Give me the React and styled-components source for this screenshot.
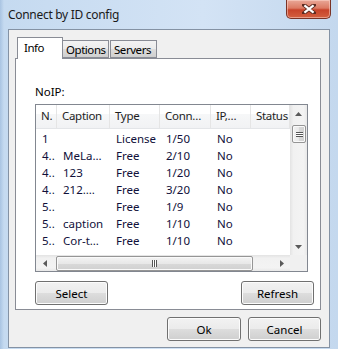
import React from 'react'
import styled, { createGlobalStyle } from 'styled-components'

const GlobalStyle = createGlobalStyle`
  html, body { margin: 0; padding: 0; background: #cfe0f3; }
  body { font-family: "Noto Sans", "Open Sans", sans-serif; font-size: 11.5px; color: #000; }
`

const columns = ['N.', 'Caption', 'Type', 'Conn…', 'IP,…', 'Status']
const rows = [
  ['1', '', 'License', '1/50', 'No'],
  ['4..', 'MeLa…', 'Free', '2/10', 'No'],
  ['4..', '123', 'Free', '1/20', 'No'],
  ['4..', '212.…', 'Free', '3/20', 'No'],
  ['5..', '', 'Free', '1/9', 'No'],
  ['5..', 'caption', 'Free', '1/10', 'No'],
  ['5..', 'Cor-t…', 'Free', '1/10', 'No'],
]

//small scroll arrows
const Arrow = ({ dir }) => {
  const pts = {
    up: '0,4 3.5,0 7,4',
    down: '0,0 3.5,4 7,0',
    left: '4,0 0,3.5 4,7',
    right: '0,0 4,3.5 0,7',
  }[dir]
  const vert = dir === 'up' || dir === 'down'
  return (
    <svg width={vert ? 7 : 4} height={vert ? 4 : 7}>
      <polygon points={pts} fill="#5a5a5a" />
    </svg>
  )
}

export default function App() {
  return (
    <>
      <GlobalStyle />
      <Window>
        <TitleBar>
          <Title>Connect by ID config</Title>
          <CloseButton>
            <svg width="14" height="10" viewBox="0 0 14 10">
              <path d="M2 1 L12 9 M12 1 L2 9" stroke="#5b2a20" strokeWidth="4" strokeLinecap="round" />
              <path d="M2.4 1.3 L11.6 8.7 M11.6 1.3 L2.4 8.7" stroke="#fff" strokeWidth="2.2" />
            </svg>
          </CloseButton>
        </TitleBar>
        <Client>
          <Tabs>
            <Tab active width={46}>Info</Tab>
            <Tab width={46}>Options</Tab>
            <Tab gap width={47}>Servers</Tab>
          </Tabs>
          <Panel>
            <Label>NoIP:</Label>
            <ListBox>
              <ListContent>
                <HeaderRow>
                  {columns.map((c) => (
                    <HeaderCell key={c}>{c}</HeaderCell>
                  ))}
                </HeaderRow>
                {rows.map((r, i) => (
                  <Row key={i}>
                    {r.map((v, j) => (
                      <Cell key={j}>{v}</Cell>
                    ))}
                    <Cell />
                  </Row>
                ))}
              </ListContent>
              <VScroll>
                <ArrowBox><Arrow dir="up" /></ArrowBox>
                <VTrack>
                  <VThumb>
                    <Grip vertical />
                  </VThumb>
                </VTrack>
                <ArrowBox><Arrow dir="down" /></ArrowBox>
              </VScroll>
              <HScroll>
                <ArrowBox><Arrow dir="left" /></ArrowBox>
                <HTrack>
                  <HThumb>
                    <Grip />
                  </HThumb>
                </HTrack>
                <ArrowBox><Arrow dir="right" /></ArrowBox>
              </HScroll>
              <Corner />
            </ListBox>
            <PanelButtons>
              <Button>Select</Button>
              <Button>Refresh</Button>
            </PanelButtons>
          </Panel>
          <DialogButtons>
            <Button wide>Ok</Button>
            <Button>Cancel</Button>
          </DialogButtons>
        </Client>
      </Window>
    </>
  )
}

//-----------------------------------------------style-----------------------------------------------//

const Window = styled.div`
  width: 338px;
  height: 349px;
  box-sizing: border-box;
  display: flex;
  flex-direction: column;
  padding: 0 8px 1px 8px;
  background: linear-gradient(90deg, #a9c4e2 0px, #c5daf0 4px, #d3e3f5 60%, #c4d8ee 100%);
`

const TitleBar = styled.div`
  height: 29px;
  display: flex;
  justify-content: space-between;
  align-items: flex-start;
`

const Title = styled.div`
  margin-top: 6px;
  font-size: 12px;
  color: #1a1a1a;
  letter-spacing: -0.3px;
`

const CloseButton = styled.div`
  width: 45px;
  height: 19px;
  margin-right: -1px;
  box-sizing: border-box;
  border: 1px solid #7a3326;
  border-top: none;
  border-radius: 0 0 5px 5px;
  background: linear-gradient(180deg, #e9a898 0%, #dc7a63 45%, #c8432a 55%, #d4603f 100%);
  box-shadow: inset 0 0 0 1px rgba(255, 220, 210, 0.5);
  display: flex;
  align-items: center;
  justify-content: center;
`

const Client = styled.div`
  flex: 1;
  display: flex;
  flex-direction: column;
  background: #f0f0f0;
  border: 1px solid #8492a4;
`

const Tabs = styled.div`
  display: flex;
  align-items: flex-end;
  height: 21px;
  margin: 7px 0 0 8px;
  position: relative;
  z-index: 1;
`

const Tab = styled.div`
  box-sizing: border-box;
  width: ${(p) => p.width}px;
  height: ${(p) => (p.active ? '22px' : '18px')};
  margin-bottom: ${(p) => (p.active ? '-1px' : '0')};
  margin-left: ${(p) => (p.gap ? '1px' : '0')};
  padding: ${(p) => (p.active ? '2px 0 0 6px' : '1px 0 0 3px')};
  border: 1px solid #898c95;
  border-bottom: ${(p) => (p.active ? 'none' : '1px solid #898c95')};
  border-left: ${(p) => (p.active || p.gap ? '1px solid #898c95' : 'none')};
  background: ${(p) => (p.active ? '#fff' : 'linear-gradient(180deg, #f3f3f3 0%, #ebebeb 50%, #dddddd 51%, #cfcfcf 100%)')};
  line-height: 15px;
  letter-spacing: -0.45px;
  white-space: nowrap;
  overflow: hidden;
  color: #000;
`

const Panel = styled.div`
  box-sizing: border-box;
  height: 252px;
  margin: 0 8px 0 6px;
  background: #fff;
  border: 1px solid #898c95;
  padding: 25px 11px 0 19px;
  display: flex;
  flex-direction: column;
`

const Label = styled.div`
  height: 20px;
  line-height: 15px;
`

const ListBox = styled.div`
  box-sizing: border-box;
  height: 168px;
  margin-right: 1px;
  border: 1px solid #828790;
  display: grid;
  grid-template-columns: 1fr 17px;
  grid-template-rows: 1fr 16px;
`

const ListContent = styled.div`
  overflow: hidden;
`

const gridCols = '21px 53px 50px 51px 40px 1fr'

const HeaderRow = styled.div`
  display: grid;
  grid-template-columns: ${gridCols};
  height: 24px;
  margin-bottom: 1px;
  background: linear-gradient(180deg, #ffffff 0%, #ffffff 40%, #f6f7f8 41%, #f1f2f4 100%);
  border-bottom: 1px solid #e3e5e8;
  box-sizing: border-box;
`

const HeaderCell = styled.div`
  padding-left: 5px;
  line-height: 22px;
  border-right: 1px solid #e5e5e5;
  white-space: nowrap;
  overflow: hidden;
  color: #1e1e1e;
  letter-spacing: -0.3px;
`

const Row = styled.div`
  display: grid;
  grid-template-columns: ${gridCols};
  height: 17px;
`

const Cell = styled.div`
  padding-left: 6px;
  line-height: 17px;
  white-space: nowrap;
  overflow: hidden;
  color: #10103a;
`

const VScroll = styled.div`
  display: flex;
  flex-direction: column;
  background: linear-gradient(90deg, #e3e3e3 0%, #f1f1f1 20%, #f3f3f3 80%, #e8e8e8 100%);
`

const HScroll = styled.div`
  display: flex;
  background: linear-gradient(180deg, #e3e3e3 0%, #f1f1f1 20%, #f3f3f3 80%, #e8e8e8 100%);
`

const ArrowBox = styled.div`
  flex: 0 0 17px;
  min-height: 16px;
  display: flex;
  align-items: center;
  justify-content: center;
`

const VTrack = styled.div`
  flex: 1;
  padding: 3px 1px 0 2px;
`

const VThumb = styled.div`
  box-sizing: border-box;
  height: 18px;
  border: 1px solid #959595;
  border-radius: 2px;
  background: linear-gradient(90deg, #f3f3f3 0%, #e8e8e8 50%, #d9d9d9 51%, #d0d0d0 100%);
  box-shadow: inset 0 0 0 1px #fafafa;
  display: flex;
  align-items: center;
  justify-content: center;
`

const HTrack = styled.div`
  flex: 1;
  padding: 1px 20px 0 3px;
  display: flex;
  align-items: stretch;
`

const HThumb = styled.div`
  flex: 1;
  box-sizing: border-box;
  height: 15px;
  border: 1px solid #959595;
  border-radius: 2px;
  background: linear-gradient(180deg, #f3f3f3 0%, #e8e8e8 50%, #d9d9d9 51%, #d0d0d0 100%);
  box-shadow: inset 0 0 0 1px #fafafa;
  display: flex;
  align-items: center;
  justify-content: center;
`

const Grip = styled.div`
  width: ${(p) => (p.vertical ? '7px' : '5px')};
  height: ${(p) => (p.vertical ? '5px' : '7px')};
  background: ${(p) =>
    p.vertical
      ? 'repeating-linear-gradient(180deg, #555 0 1px, #fff 1px 2px)'
      : 'repeating-linear-gradient(90deg, #555 0 1px, #fff 1px 2px)'};
`

const Corner = styled.div`
  background: #f0f0f0;
`

const PanelButtons = styled.div`
  display: flex;
  justify-content: space-between;
  margin-top: 9px;
  margin-right: -5px;
`

const DialogButtons = styled.div`
  display: flex;
  justify-content: flex-end;
  gap: 7px;
  margin: 7px 8px 0 0;
`

const Button = styled.div`
  box-sizing: border-box;
  width: ${(p) => (p.wide ? '74px' : '73px')};
  height: 24px;
  border: 1px solid #707070;
  border-radius: 3px;
  background: linear-gradient(180deg, #f2f2f2 0%, #ebebeb 50%, #dddddd 51%, #cfcfcf 100%);
  box-shadow: inset 0 0 0 1px #fcfcfc;
  display: flex;
  align-items: center;
  justify-content: center;
  color: #000;
`
